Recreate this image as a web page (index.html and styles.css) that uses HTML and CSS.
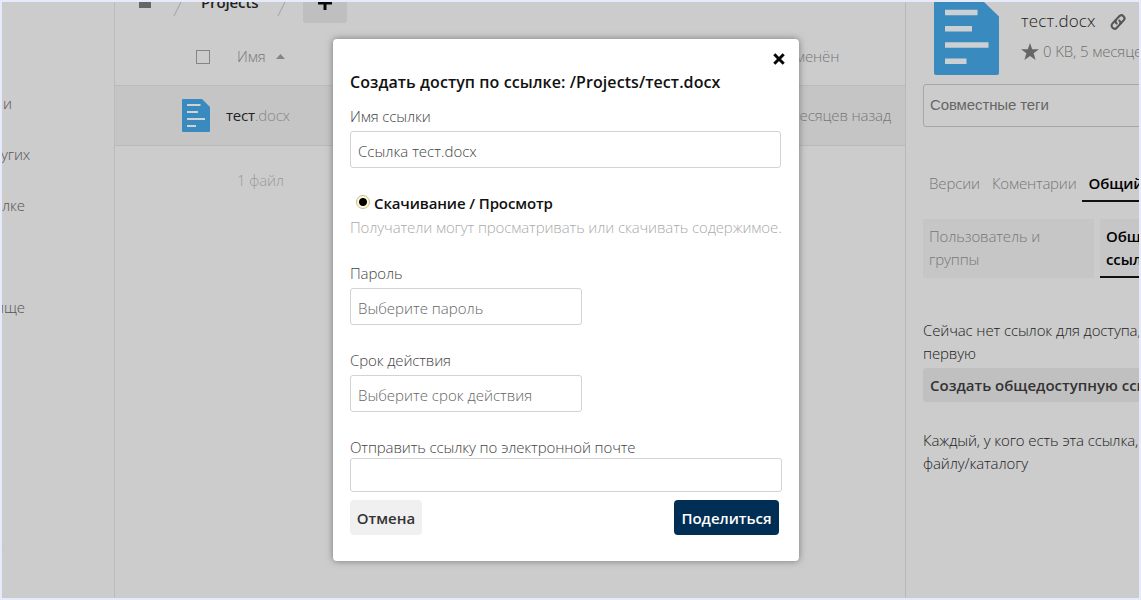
FILE: index.html
```html
<!DOCTYPE html>
<html lang="ru">
<head>
<meta charset="utf-8">
<title>Projects</title>
<link rel="stylesheet" href="styles.css">
</head>
<body>
<div class="app">
  <nav class="sidebar">
    <a class="nav-item nav-tail-1">и</a>
    <a class="nav-item nav-tail-2">угих</a>
    <a class="nav-item nav-tail-3">лке</a>
    <a class="nav-item"></a>
    <a class="nav-item nav-tail-5">ище</a>
    <a class="nav-item nav-tail-last">и</a>
  </nav>
  <main class="files">
    <div class="crumbs">
      <span class="home"></span>
      <svg class="slash slash-first" width="9" height="14" viewBox="0 0 9 14"><path d="M8 0L1 14" stroke="#a2a2a2" fill="none"/></svg>
      <span class="crumb">Projects</span>
      <svg class="slash" width="9" height="14" viewBox="0 0 9 14"><path d="M8 0L1 14" stroke="#a2a2a2" fill="none"/></svg>
      <span class="add"><svg width="16" height="16" viewBox="0 0 16 16"><path d="M8 1v14M1 8h14" stroke="#080808" stroke-width="3" fill="none"/></svg></span>
    </div>
    <div class="row head">
      <span class="check"></span>
      <span class="col-name">Имя</span>
      <svg class="sort" width="9" height="5" viewBox="0 0 9 5"><path d="M4.500 0L9 5H0z" fill="#858585"/></svg>
      <span class="col-date">Изменён</span>
    </div>
    <div class="row file">
      <svg class="file-icon" width="28" height="33" viewBox="0 0 28 33"><path d="M1 0h19l8 8v24q0 1-1 1H1q-1 0-1-1V1q0-1 1-1z" fill="#398bbf"/><path d="M5 6h13.500M5 13h11M5 20h18M5 27h9" stroke="#d0d3d6" stroke-width="2.200"/></svg>
      <span class="file-name">тест<span class="ext">.docx</span></span>
      <span class="file-date">5 месяцев назад</span>
    </div>
    <div class="summary">1 файл</div>
  </main>
  <aside class="details">
    <div class="info">
      <svg class="big-icon" width="65" height="73" viewBox="0 0 65 73"><path d="M0 0h50l15 14.500V71q0 2-2 2H2q-2 0-2-2z" fill="#398bbf"/><path d="M11 10.500h32.500M11 26.800h27M11 43h43.500M11 59.300h21.500" stroke="#cdd0d3" stroke-width="5.500"/></svg>
      <div class="info-text">
        <div class="info-name"><span>тест.docx</span>
          <svg width="18" height="18" viewBox="0 0 18 18" fill="none" stroke="#555" stroke-width="2.100" stroke-linecap="round"><g transform="rotate(-47 9 9)"><path d="M8.500 6H4a3 3 0 0 0 0 6h4.500a3 3 0 0 0 2.500-3"/><path d="M9.500 12H14a3 3 0 0 0 0-6H9.500A3 3 0 0 0 7 9"/></g></svg>
        </div>
        <div class="info-meta"><svg width="18" height="17" viewBox="0 0 18 17"><path d="M9 0l2.200 6.300H18l-5.400 4L14.600 17 9 12.900 3.400 17l2-6.700L0 6.300h6.800z" fill="#666"/></svg><span>0 KB, 5 месяцев назад</span></div>
      </div>
    </div>
    <div class="tags"><span>Совместные теги</span></div>
    <div class="tabs"><span class="tab tab-versions">Версии</span><span class="tab tab-comments">Коментарии</span><span class="tab active">Общий доступ</span></div>
    <div class="subtabs">
      <div class="subtab">Пользователь и<br>группы</div>
      <div class="subtab current">Общедоступные<br>ссылки</div>
    </div>
    <p class="note">Сейчас нет ссылок для доступа, создайте<br>первую</p>
    <div class="create">Создать общедоступную ссылку</div>
    <p class="note note-last">Каждый, у кого есть эта ссылка, имеет доступ к<br>файлу/каталогу</p>
  </aside>
  <section class="modal">
    <div class="modal-top"><svg width="12" height="12" viewBox="0 0 12 12"><path d="M1.300 1.300l9.400 9.400M10.700 1.300l-9.400 9.400" stroke="#080808" stroke-width="3" fill="none"/></svg></div>
    <h1 class="title">Создать доступ по ссылке: /Projects/тест.docx</h1>
    <div class="label l-name">Имя ссылки</div>
    <div class="field wide value">Ссылка тест.docx</div>
    <div class="option"><span class="radio"></span><span class="option-text">Скачивание / Просмотр</span></div>
    <div class="hint">Получатели могут просматривать или скачивать содержимое.</div>
    <div class="label l-pass">Пароль</div>
    <div class="field f-pass">Выберите пароль</div>
    <div class="label l-term">Срок действия</div>
    <div class="field f-term">Выберите срок действия</div>
    <div class="label l-mail">Отправить ссылку по электронной почте</div>
    <div class="field mail"></div>
    <div class="actions"><span class="btn">Отмена</span><span class="btn primary">Поделиться</span></div>
  </section>
</div>
</body>
</html>
```

FILE: styles.css
```css
* { box-sizing: border-box; }
body {
  margin: 0;
  width: 1141px;
  height: 600px;
  overflow: hidden;
  font: 300 15px/20px "Open Sans", "Noto Sans", sans-serif;
  letter-spacing: -0.12px;
  color: #333;
  white-space: nowrap;
}
svg { display: block; flex: none; }
.app {
  position: relative;
  display: flex;
  width: 1141px;
  height: 600px;
  border: 2px solid #e6eafa;
  background: #ccc;
  overflow: hidden;
}

/* Left navigation */
.sidebar {
  flex: none;
  width: 113px;
  padding-top: 76px;
  border-right: 1px solid #bbb;
  overflow: hidden;
  color: #555;
}
.nav-item { display: block; height: 51px; line-height: 51px; }
.nav-tail-1 { margin-left: 1px; }
.nav-tail-2 { margin-left: -1px; }
.nav-tail-5 { margin-left: -7px; }
.nav-tail-last { margin: 190px 0 0 -8px; }

/* File list */
.files { flex: none; width: 791px; border-right: 1px solid #b8b8b8; }
.crumbs { display: flex; height: 26px; padding-left: 24px; overflow: hidden; }
.home { width: 12px; height: 6px; background: #666; }
.slash-first { margin-left: 22px; }
.crumb { margin: -10px 19px 0 19px; font-weight: 600; color: #222; }
.add {
  display: flex;
  justify-content: center;
  width: 44px;
  height: 21px;
  margin-left: 17px;
  border-radius: 0 0 3px 3px;
  background: #bfbfbf;
}
.add svg { margin-top: -7px; }
.row { display: flex; align-items: center; }
.head { height: 58px; padding-left: 81px; border-bottom: 1px solid #bbb; color: #777; }
.check { width: 14px; height: 14px; border: 1px solid #858585; }
.col-name { margin: -2px 0 0 27px; }
.sort { margin-left: 10px; }
.col-date { margin: -2px 0 0 493px; }
.file { height: 60px; padding-left: 67px; background: #c5c5c5; border-bottom: 1px solid #b9b9b9; }
.file-name { margin: -1px 0 0 16px; color: #222; font-weight: 400; letter-spacing: -0.2px; }
.ext { color: #888; font-weight: 300; }
.file-date { margin: -2px 14px 0 auto; color: #777; }
.summary { padding: 24px 0 0 122px; color: #999; }

/* Details panel */
.details { flex: none; width: 260px; padding-left: 17px; }
.info { display: flex; height: 82px; padding-left: 11px; }
.info-text { padding: 8px 0 0 22px; }
.info-name { display: flex; align-items: center; gap: 13px; font-size: 17px; letter-spacing: 0.15px; color: #222; }
.info-name svg { margin-top: 3px; }
.info-meta { display: flex; align-items: center; gap: 4px; margin-top: 10px; color: #707070; }
.tags {
  height: 43px;
  padding: 11px 6px;
  border: 1px solid #a6a6a6;
  border-radius: 3px;
  font: 400 15px/18px "Liberation Sans", Arial, sans-serif;
  color: #666;
}
.tabs { display: flex; height: 75px; padding: 39px 0 0 6px; }
.tab { height: 36px; line-height: 34px; color: #777; }
.tab-comments { margin-left: 12px; letter-spacing: -0.2px; }
.active { margin-left: 6px; padding-left: 6px; border-bottom: 2px solid #111; color: #000; font-weight: 600; }
.subtabs { display: flex; gap: 6px; margin-top: 17px; }
.subtab { flex: none; width: 171px; height: 59px; padding: 6px; background: #c6c6c6; line-height: 23px; color: #777; }
.current { border-bottom: 2px solid #111; color: #000; font-weight: 600; }
.note { margin: 41px 0 0; line-height: 23px; color: #222; }
.create {
  width: 236px;
  height: 34px;
  margin-top: 3px;
  padding-left: 7px;
  border-radius: 3px;
  background: #c0c0c0;
  line-height: 34px;
  font-weight: 600;
  letter-spacing: 0;
  color: #333;
}
.note-last { margin-top: 27px; }

/* Share dialog */
.modal {
  position: absolute;
  left: 331px;
  top: 37px;
  width: 466px;
  height: 522px;
  padding: 14px 0 0 17px;
  border-radius: 4px;
  background: #fff;
  box-shadow: 0 0 7px #777;
}
.modal-top { display: flex; justify-content: flex-end; height: 19px; padding-right: 14px; }
.title { margin: 0; font-size: 16px; line-height: 21px; font-weight: 600; letter-spacing: 0.08px; color: #111; }
.label { height: 20px; color: #444; }
.l-name { margin-top: 13px; }
.field {
  width: 232px;
  height: 37px;
  padding-left: 7px;
  border: 1px solid #d3d3d3;
  border-radius: 3px;
  line-height: 38px;
  letter-spacing: 0;
  color: #666;
}
.wide { width: 431px; margin-top: 5px; }
.value { color: #444; }
.option { display: flex; align-items: center; height: 22px; margin-top: 24px; padding-left: 6px; }
.radio {
  width: 14px;
  height: 14px;
  margin-top: -2px;
  border: 1px solid #c9bd94;
  border-radius: 50%;
  background: radial-gradient(circle, #000 0 3.500px, #fff8d8 4.500px);
}
.option-text { margin-left: 4px; font-weight: 600; color: #111; }
.hint { margin-top: 3px; color: #aaa; }
.l-pass { margin-top: 26px; }
.f-pass { margin-top: 5px; }
.l-term { margin-top: 25px; }
.f-term { margin-top: 5px; }
.l-mail { margin-top: 25px; }
.mail { width: 432px; height: 34px; margin-top: 1px; }
.actions { display: flex; justify-content: space-between; width: 429px; margin-top: 8px; }
.btn {
  width: 72px;
  height: 35px;
  border-radius: 4px;
  background: #f0f0f0;
  line-height: 36px;
  text-align: center;
  font-weight: 600;
  letter-spacing: 0;
  color: #333;
}
.primary { width: 105px; background: #002e54; color: #fff; }
```
